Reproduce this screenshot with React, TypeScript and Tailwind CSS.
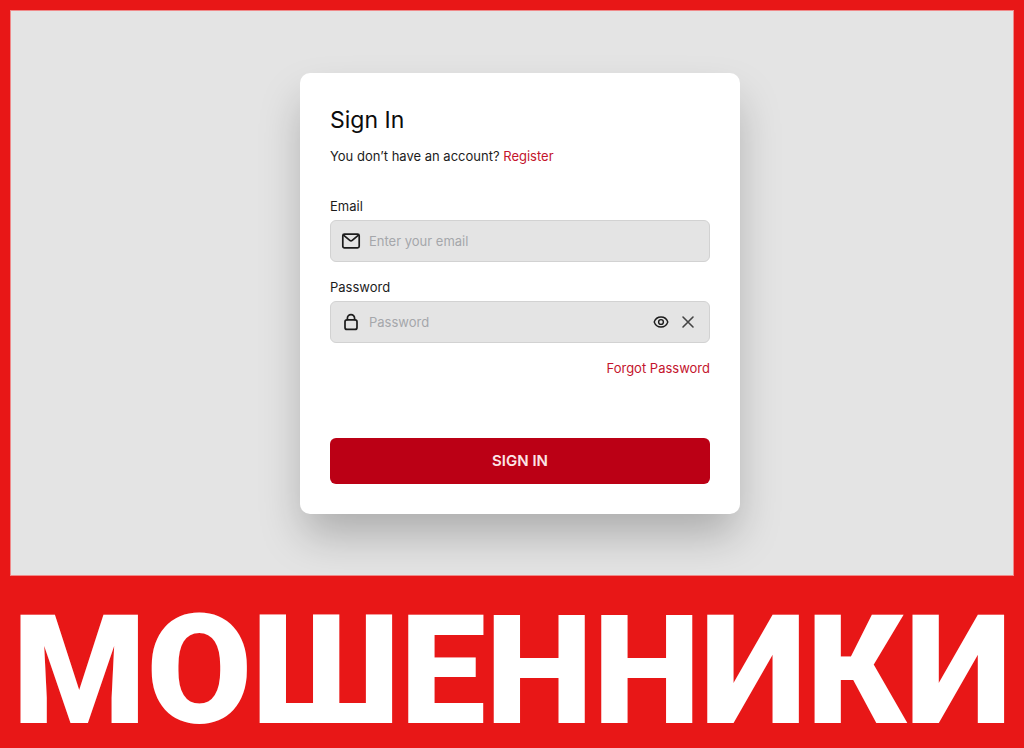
import React from 'react';

const MailIcon: React.FC = () => (
  <svg className="w-5 h-5" viewBox="0 0 20 20" fill="none" stroke="currentColor" strokeWidth="1.7" strokeLinejoin="round">
    <rect x="1.8" y="3.2" width="16.4" height="13.6" rx="1.6" />
    <path d="M2.2 3.800l6.600 5.600q1.200 1 2.400 0l6.600-5.600" />
  </svg>
);

const LockIcon: React.FC = () => (
  <svg className="w-5 h-5" viewBox="0 0 20 20" fill="none" stroke="currentColor" strokeWidth="1.7" strokeLinecap="round">
    <rect x="4" y="7.8" width="12" height="9.6" rx="2" />
    <path d="M6.400 7.400V6.200a3.600 3.600 0 0 1 7.200 0v1.200" />
  </svg>
);

const EyeIcon: React.FC = () => (
  <svg className="w-4 h-4" viewBox="0 0 16 16" fill="none" stroke="currentColor" strokeWidth="1.4" strokeLinejoin="round">
    <path d="M1.200 8c1.200-3.400 3.900-5 6.800-5s5.600 1.600 6.800 5c-1.200 3.400-3.900 5-6.800 5s-5.600-1.600-6.800-5z" />
    <circle cx="8" cy="8" r="2.4" />
  </svg>
);

const ClearIcon: React.FC = () => (
  <svg className="w-4 h-4" viewBox="0 0 16 16" fill="none" stroke="currentColor" strokeWidth="1.6" strokeLinecap="round">
    <path d="M3 3l10 10M13 3L3 13" />
  </svg>
);

interface FieldProps {
  id: string;
  label: string;
  type: string;
  placeholder: string;
  icon: React.ReactNode;
  children?: React.ReactNode;
}

const Field: React.FC<FieldProps> = ({ id, label, type, placeholder, icon, children }) => (
  <div className="flex flex-col gap-1">
    <label htmlFor={id} className="leading-5">
      {label}
    </label>
    <div className="flex h-[42px] items-center gap-2 rounded-md border border-[#d2d2d2] bg-[#e4e4e4] pr-[13px] pl-[10px]">
      {icon}
      <input
        id={id}
        type={type}
        placeholder={placeholder}
        className="min-w-0 flex-1 bg-transparent leading-5 outline-none placeholder:text-[#a5a7ab]"
      />
      {children}
    </div>
  </div>
);

export default function App() {
  return (
    <div className="flex min-h-screen flex-col bg-[#e81717] px-[10px] pt-[10px] font-['Inter',sans-serif] text-[13px] text-[#1c1c1c]">
      {/* Sign in page */}
      <main className="flex justify-center overflow-hidden border border-[#f08a8a] bg-[#e4e4e4] pt-[62px] pr-4 pb-[61px] pl-8">
        <form
          className="w-full max-w-[440px] rounded-[10px] bg-white p-[30px] shadow-[0_24px_44px_-4px_rgba(0,0,0,0.25)]"
          onSubmit={(e) => e.preventDefault()}
        >
          <h1 className="text-[23px] leading-[34px] text-[#0c0c0c]">Sign In</h1>
          <p className="mt-[9px] leading-5">
            You don’t have an account?{' '}
            <a href="#register" className="text-[#c4142c]">
              Register
            </a>
          </p>

          <div className="mt-[30px] flex flex-col gap-[15px]">
            <Field id="email" label="Email" type="email" placeholder="Enter your email" icon={<MailIcon />} />
            <Field id="password" label="Password" type="password" placeholder="Password" icon={<LockIcon />}>
              <div className="flex items-center gap-[11px]">
                <button type="button" aria-label="Show password">
                  <EyeIcon />
                </button>
                <button type="button" aria-label="Clear password" className="text-[#444444]">
                  <ClearIcon />
                </button>
              </div>
            </Field>
            <a href="#forgot" className="self-end leading-5 text-[#c4142c]">
              Forgot Password
            </a>
          </div>

          <button
            type="submit"
            className="mt-[60px] h-[46px] w-full rounded-md bg-[#bb0015] text-[15px] font-semibold text-[#fbe4e6]"
          >
            SIGN IN
          </button>
        </form>
      </main>

      {/* Warning banner */}
      <div className="flex flex-1 items-center justify-center pt-4">
        <strong className="whitespace-nowrap font-['Roboto',sans-serif] text-[153px] leading-none font-black text-white">
          МОШЕННИКИ
        </strong>
      </div>
    </div>
  );
}
